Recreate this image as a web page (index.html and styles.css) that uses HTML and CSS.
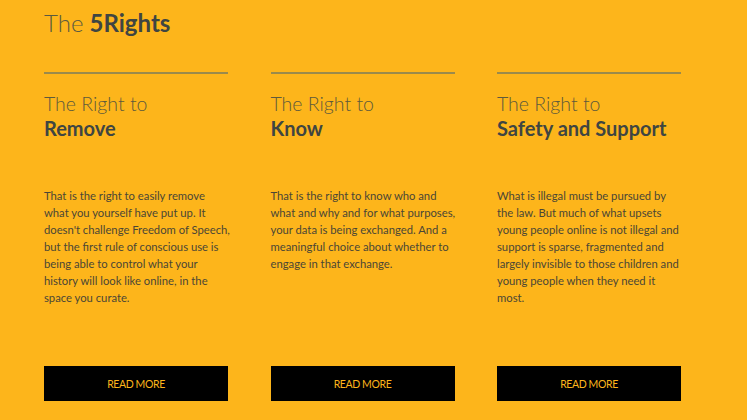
FILE: index.html
```html
<!DOCTYPE html>
<html>
<head>
<meta charset="utf-8">
<link rel="stylesheet" href="styles.css">
</head>
<body>
<div class="page">
  <h1 class="title"><span class="light">The</span> <span class="bold">5Rights</span></h1>
  <div class="cards">
    <div class="card">
      <h2 class="card-head"><span class="pre">The Right to</span><span class="name">Remove</span></h2>
      <p class="card-text">That is the right to easily remove what you yourself have put up. It doesn't challenge Freedom of Speech, but the first rule of conscious use is being able to control what your history will look like online, in the space you curate.</p>
      <a class="btn" href="#">READ MORE</a>
    </div>
    <div class="card">
      <h2 class="card-head"><span class="pre">The Right to</span><span class="name">Know</span></h2>
      <p class="card-text">That is the right to know who and what and why and for what purposes, your data is being exchanged. And a meaningful choice about whether to engage in that exchange.</p>
      <a class="btn" href="#">READ MORE</a>
    </div>
    <div class="card">
      <h2 class="card-head"><span class="pre">The Right to</span><span class="name">Safety and Support</span></h2>
      <p class="card-text">What is illegal must be pursued by the law. But much of what upsets young people online is not illegal and support is sparse, fragmented and largely invisible to those children and young people when they need it most.</p>
      <a class="btn" href="#">READ MORE</a>
    </div>
  </div>
</div>
</body>
</html>
```
FILE: styles.css
```css
html, body {
  margin: 0;
  padding: 0;
  background: #fdb51b;
  font-family: Lato, "Open Sans", sans-serif;
  color: #444;
}
.page {
  padding: 8px 44px 0 44px;
}
.title {
  margin: 0;
  font-size: 24px;
  line-height: 30px;
  font-weight: normal;
  color: #3f4542;
}
.title .light { font-weight: 300; color: #5a5a40; }
.title .bold { font-weight: 700; }
.cards {
  margin-top: 34px;
  display: flex;
  gap: 42.5px;
}
.card {
  width: 184px;
  height: 327px;
  border-top: 2px solid #9a8a4c;
  display: flex;
  flex-direction: column;
}
.card-head {
  margin: 18px 0 0 0;
  display: flex;
  flex-direction: column;
  font-weight: normal;
}
.card-head .pre {
  font-size: 19.5px;
  line-height: 24px;
  font-weight: 300;
  color: #5e5a3c;
}
.card-head .name {
  font-size: 20px;
  line-height: 24px;
  font-weight: 700;
  color: #3f4542;
}
.card-text {
  margin: 47px 0 0 0;
  width: 187.5px;
  font-size: 11.25px;
  line-height: 17px;
  color: #4a4636;
}
.btn {
  margin-top: auto;
  height: 35px;
  background: #000;
  color: #fdb51b;
  font-size: 10.5px;
  letter-spacing: -0.4px;
  text-decoration: none;
  display: flex;
  align-items: center;
  justify-content: center;
}
```
